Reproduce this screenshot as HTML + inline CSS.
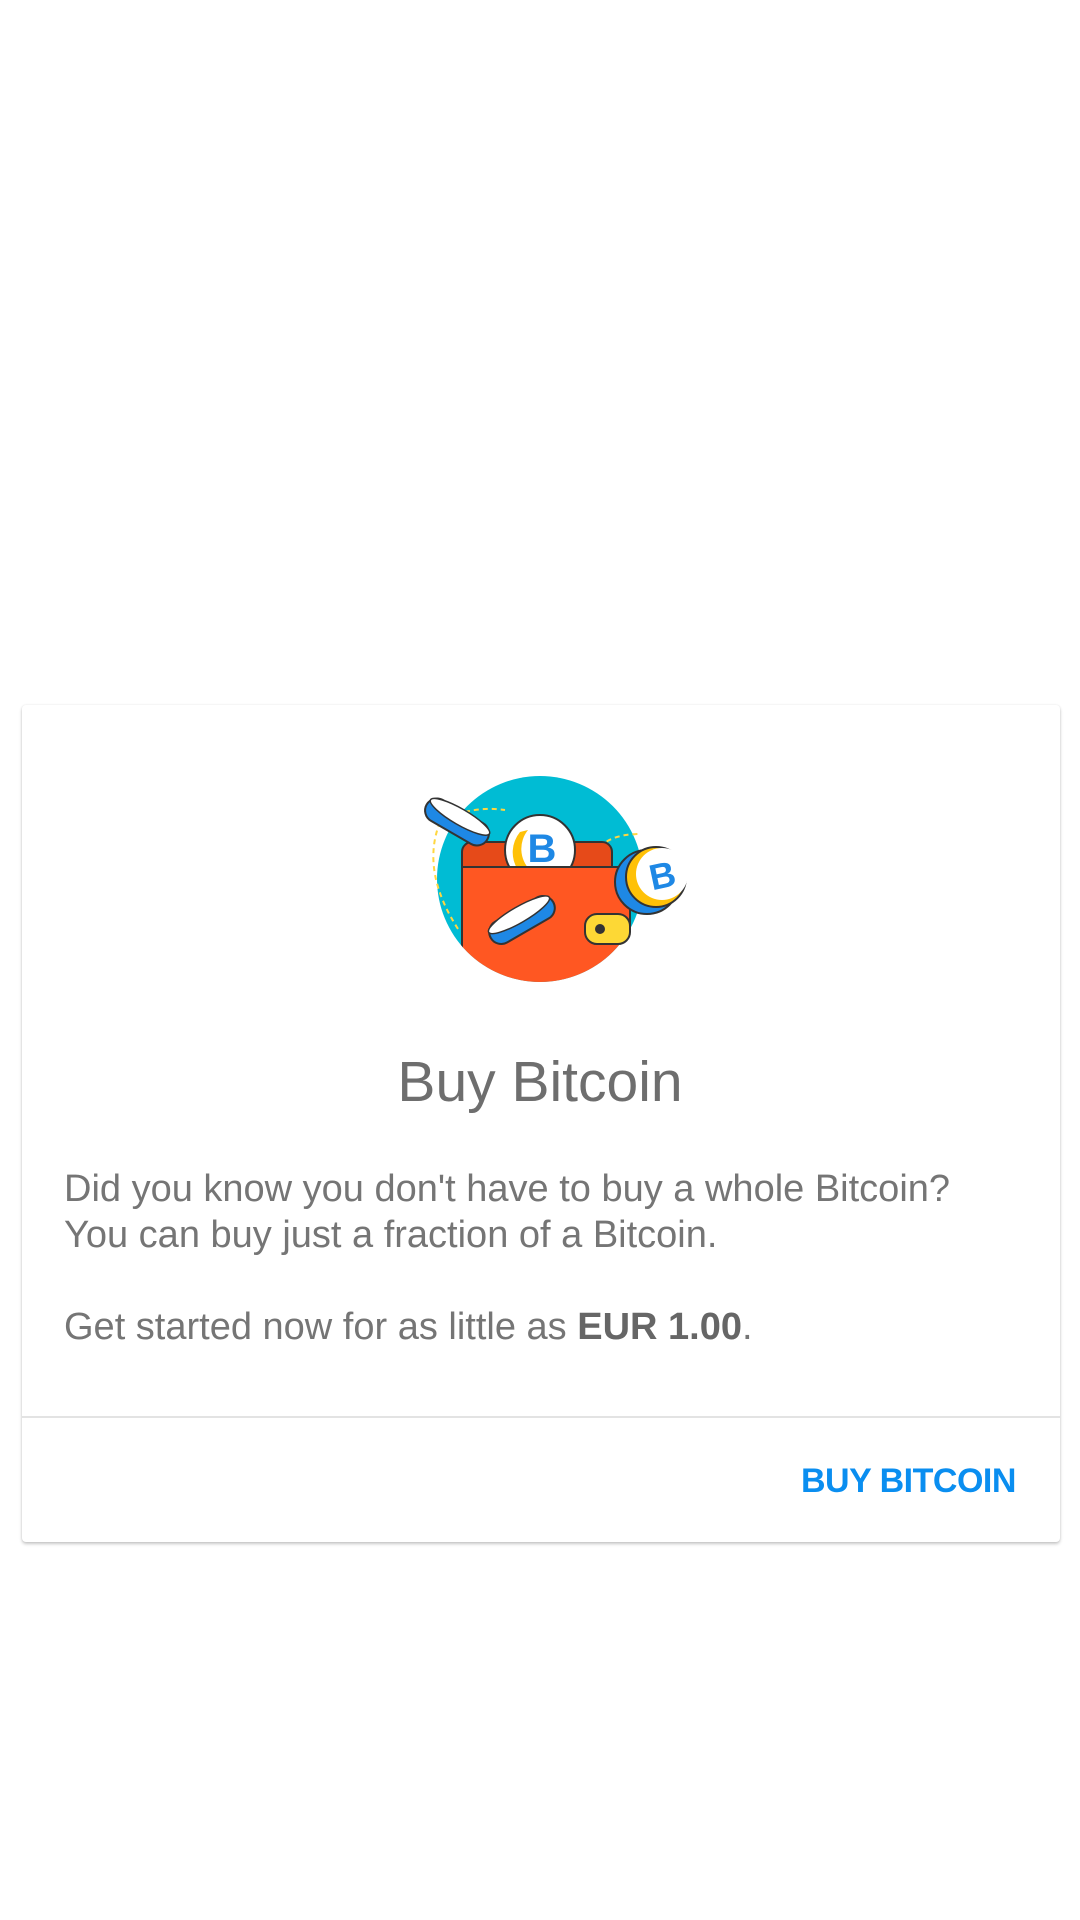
<!DOCTYPE html>
<html><head><meta charset="utf-8"><style>
html,body{margin:0;padding:0;background:#fff;width:1080px;height:1920px;overflow:hidden;font-family:"Liberation Sans",sans-serif}
.card{position:absolute;left:22px;top:705px;width:1038px;height:837px;background:#fff;border-radius:4px;box-shadow:0 2px 3px rgba(0,0,0,.22),0 0 2px rgba(0,0,0,.08)}
.title{position:absolute;left:0;width:1080px;top:1049px;text-align:center;font-size:57px;line-height:66px;color:#6e6e6e}
.body{position:absolute;left:64px;top:1166px;font-size:38px;color:#757575;line-height:46px;white-space:nowrap}
.div{position:absolute;left:22px;width:1038px;top:1416px;height:2px;background:#e3e3e3}
.btn{position:absolute;left:801px;top:1461px;font-size:34px;line-height:40px;font-weight:bold;color:#0a8ef0;letter-spacing:-0.5px}
</style></head><body>
<div class="card"></div>
<svg style="position:absolute;left:400px;top:762px" width="300" height="230" viewBox="0 0 300 230">
<circle cx="140" cy="117" r="103" fill="#00bcd4"/>
<clipPath id="c"><circle cx="140" cy="117" r="103"/></clipPath>
<path d="M40 60 Q20 110 60 170" stroke="#ffd740" stroke-width="2" stroke-dasharray="5 4" fill="none"/>
<path d="M65 50 Q85 45 105 48" stroke="#ffd740" stroke-width="2" stroke-dasharray="5 4" fill="none"/>
<path d="M190 100 Q200 72 240 72" stroke="#ffd740" stroke-width="2" stroke-dasharray="5 4" fill="none"/>
<rect x="62" y="80" width="150" height="40" rx="10" fill="#e64a19" stroke="#333" stroke-width="2"/>
<circle cx="140" cy="88" r="35" fill="#fff" stroke="#333" stroke-width="2"/>
<path d="M120 70 A32 32 0 0 0 118 108 L130 108 A30 30 0 0 1 128 68Z" fill="#ffc107"/>
<text x="142" y="100" font-size="40" font-weight="bold" fill="#1e88e5" text-anchor="middle" font-family="Liberation Sans">B</text>
<g clip-path="url(#c)">
<rect x="62" y="105" width="168" height="140" fill="#ff5722" stroke="#333" stroke-width="2"/>
</g>
<rect x="185" y="152" width="45" height="30" rx="12" fill="#fdd835" stroke="#333" stroke-width="2"/>
<circle cx="200" cy="167" r="5" fill="#333"/>
<g transform="rotate(30 57 60)"><rect x="22" y="48" width="70" height="24" rx="12" fill="#1e88e5" stroke="#333" stroke-width="2"/><ellipse cx="57" cy="54" rx="34" ry="8" fill="#fff" stroke="#333" stroke-width="1.5"/></g>
<g transform="rotate(-30 122 158)"><rect x="86" y="146" width="72" height="24" rx="12" fill="#1e88e5" stroke="#333" stroke-width="2"/><ellipse cx="122" cy="152" rx="35" ry="8" fill="#fff" stroke="#333" stroke-width="1.5"/></g>
<circle cx="247" cy="120" r="32" fill="#1e88e5" stroke="#333" stroke-width="2"/>
<circle cx="256" cy="115" r="30" fill="#ffc107" stroke="#333" stroke-width="2"/>
<circle cx="262" cy="112" r="26" fill="#fff"/>
<text x="262" y="126" font-size="36" font-weight="bold" fill="#1e88e5" text-anchor="middle" font-family="Liberation Sans" transform="rotate(-12 262 112)">B</text>
</svg>
<div class="title">Buy Bitcoin</div>
<div class="body">Did you know you don't have to buy a whole Bitcoin?<br>You can buy just a fraction of a Bitcoin.<br><br>Get started now for as little as <b style="color:#666">EUR 1.00</b>.</div>
<div class="div"></div>
<div class="btn">BUY BITCOIN</div>
</body></html>
